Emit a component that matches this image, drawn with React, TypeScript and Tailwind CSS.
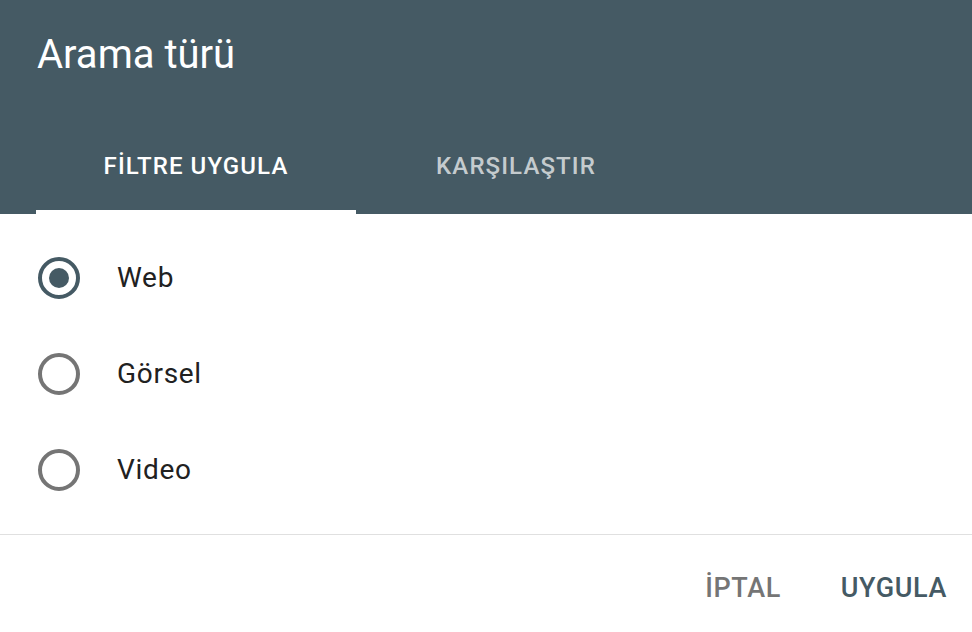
import { useState } from 'react';

const options = ['Web', 'Görsel', 'Video'];

export default function App() {
  const [tab, setTab] = useState(0);
  const [selected, setSelected] = useState('Web');

  return (
    <div className="w-[972px] h-[632px] bg-white flex flex-col font-['Roboto',sans-serif] overflow-hidden">
      <header className="h-[214px] bg-[#455a64] flex flex-col">
        <h1 className="pl-[37px] pt-[29px] text-[40px] leading-[52px] text-white">Arama türü</h1>
        <div className="mt-auto flex pl-[36px]">
          {['FİLTRE UYGULA', 'KARŞILAŞTIR'].map((label, i) => (
            <button
              key={label}
              onClick={() => setTab(i)}
              className={`w-[320px] h-[96px] flex flex-col text-[24px] font-medium tracking-[1.1px] ${
                tab === i ? 'text-white' : 'text-white/70'
              }`}
            >
              <span className="flex-1 flex items-center justify-center pt-[4px]">{label}</span>
              <span className={`h-[4px] w-full ${tab === i ? 'bg-white' : 'bg-transparent'}`} />
            </button>
          ))}
        </div>
      </header>

      <div className="flex flex-col py-[16px] border-b border-[#e0e0e0]">
        {options.map((opt) => {
          const on = selected === opt;
          return (
            <label key={opt} className="h-[96px] flex items-center pl-[38px] cursor-pointer" onClick={() => setSelected(opt)}>
              <span
                className={`w-[42px] h-[42px] rounded-full border-[4px] flex items-center justify-center ${
                  on ? 'border-[#455a64]' : 'border-[#757575]'
                }`}
              >
                {on && <span className="w-[20px] h-[20px] rounded-full bg-[#455a64]" />}
              </span>
              <span className="ml-[37px] text-[28px] tracking-[0.7px] text-[#212121]">{opt}</span>
            </label>
          );
        })}
      </div>

      <div className="flex-1 flex items-center justify-end pr-[25px] gap-[60px] pt-[10px]">
        <button className="text-[27px] font-medium tracking-[0.6px] text-[#757575]">İPTAL</button>
        <button className="text-[27px] font-medium tracking-[0.6px] text-[#455a64]">UYGULA</button>
      </div>
    </div>
  );
}
